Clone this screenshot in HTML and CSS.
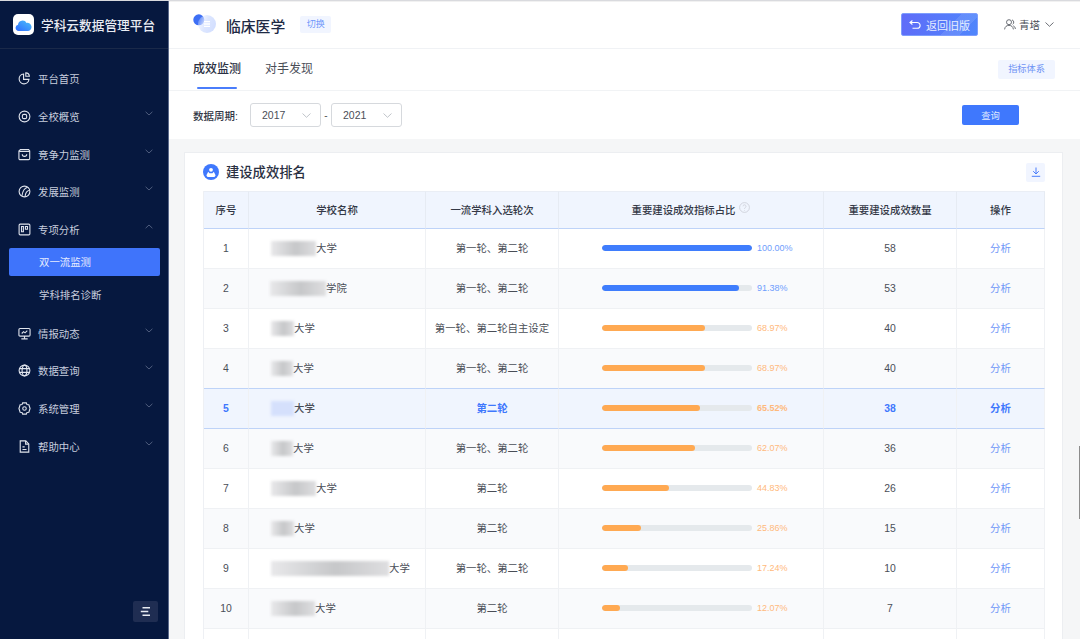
FILE: index.html
```html
<!DOCTYPE html>
<html lang="zh">
<head>
<meta charset="utf-8">
<title>学科云数据管理平台</title>
<link rel="stylesheet" href="styles.css">
</head>
<body>
<div class="app">
  <aside class="side">
    <div class="brand">
      <span class="logo"><svg width="17" height="12" viewBox="0 0 17 12"><defs><linearGradient id="cl" x1="0" y1="1" x2="1" y2="0"><stop offset="0" stop-color="#2f6bff"/><stop offset="1" stop-color="#4cc0fa"/></linearGradient></defs><path fill="url(#cl)" d="M3.6 12A3.2 3.2 0 0 1 3 5.7 4.6 4.6 0 0 1 11.6 3.9 4.1 4.1 0 0 1 13.2 12z"/></svg></span>
      <span class="brand-name">学科云数据管理平台</span>
    </div>
    <nav class="menu">
      <a class="item"><svg class="ico" viewBox="0 0 14 14"><path d="M6 2.2a5.3 5.3 0 1 0 5.8 5.8H6z"/><path d="M8.4 .9v3.7h3.9A4.2 4.2 0 0 0 8.4 .9z"/></svg><span class="label">平台首页</span></a>
      <a class="item"><svg class="ico" viewBox="0 0 14 14"><circle cx="7" cy="7" r="5.8"/><rect x="4.7" y="4.7" width="4.6" height="4.6" rx="1.6"/></svg><span class="label">全校概览</span><svg class="chev" viewBox="0 0 8 5"><path d="M.6.8 4 4 7.4.8"/></svg></a>
      <a class="item"><svg class="ico" viewBox="0 0 14 14"><path d="M2.6 1.6h8.8l1.2 1.6v8a1.3 1.3 0 0 1-1.3 1.3H2.3A1.3 1.3 0 0 1 1 11.2v-8z"/><path d="M1.2 3.6h11.6M4.6 6.6a2.4 2.4 0 0 0 4.8 0"/></svg><span class="label">竞争力监测</span><svg class="chev" viewBox="0 0 8 5"><path d="M.6.8 4 4 7.4.8"/></svg></a>
      <a class="item"><svg class="ico" viewBox="0 0 14 14"><circle cx="7" cy="7" r="5.8"/><path d="M10.4 2.4C7 3.2 5 6 4.2 11.8M12.6 5.6C10 6 8 8 7.6 12.6"/></svg><span class="label">发展监测</span><svg class="chev" viewBox="0 0 8 5"><path d="M.6.8 4 4 7.4.8"/></svg></a>
      <a class="item"><svg class="ico" viewBox="0 0 14 14"><rect x="1.2" y="1.2" width="11.6" height="11.6" rx="1.2"/><path d="M3.8 3.8h2v5.6h-2zM8 3.8h2.2v3H8z"/></svg><span class="label">专项分析</span><svg class="chev" viewBox="0 0 8 5"><path d="M.6 4.2 4 1l3.4 3.2"/></svg></a>
      <a class="sub sub-active">双一流监测</a>
      <a class="sub sub-next">学科排名诊断</a>
      <a class="item"><svg class="ico" viewBox="0 0 14 14"><rect x="1" y="1.6" width="12" height="8.2" rx="1.2"/><path d="M7 9.8v2.8M3.6 12.8h6.8M4 7l2-2 1.6 1.3L10 4"/></svg><span class="label">情报动态</span><svg class="chev" viewBox="0 0 8 5"><path d="M.6.8 4 4 7.4.8"/></svg></a>
      <a class="item"><svg class="ico" viewBox="0 0 14 14"><circle cx="7" cy="7" r="5.8"/><ellipse cx="7" cy="7" rx="2.6" ry="5.8"/><path d="M1.4 5h11.2M1.4 9h11.2"/></svg><span class="label">数据查询</span><svg class="chev" viewBox="0 0 8 5"><path d="M.6.8 4 4 7.4.8"/></svg></a>
      <a class="item"><svg class="ico" viewBox="0 0 14 14"><path d="M5 1h4l.7 1.8 2 .2L13 7l-1.3 4-2 .2L9 13H5l-.7-1.8-2-.2L1 7l1.3-4 2-.2z"/><circle cx="7" cy="7" r="1.9"/></svg><span class="label">系统管理</span><svg class="chev" viewBox="0 0 8 5"><path d="M.6.8 4 4 7.4.8"/></svg></a>
      <a class="item"><svg class="ico" viewBox="0 0 14 14"><path d="M2.4 1h6l3.2 3.2V13H2.4z"/><path d="M8.2 1v3.4h3.4M4.8 7.4h2.400M4.800 10.200h4.400"/></svg><span class="label">帮助中心</span><svg class="chev" viewBox="0 0 8 5"><path d="M.6.8 4 4 7.4.8"/></svg></a>
    </nav>
    <div class="side-foot">
      <button class="collapse"><svg width="11" height="11" viewBox="0 0 11 11"><path d="M2.500 1.800h7.500M.8 5.500h7.500M2.500 9.200h7.500"/></svg></button>
    </div>
  </aside>

  <main class="main">
    <header class="head">
      <svg class="disc" width="24" height="20" viewBox="0 0 24 20"><defs><linearGradient id="dg" x1="0" y1=".3" x2="1" y2=".7"><stop offset="0" stop-color="#dfe8ff" stop-opacity=".25"/><stop offset=".45" stop-color="#dce6ff"/><stop offset="1" stop-color="#d2deff"/></linearGradient></defs><circle cx="5.800" cy="5.800" r="5.500" fill="#3d6ff5"/><circle cx="14" cy="10" r="9" fill="url(#dg)"/><path d="M11 7.600h6M11 10h6M11 12.400h6" stroke="#fff" stroke-width="1.400"/></svg>
      <h1 class="subject">临床医学</h1>
      <span class="switch">切换</span>
      <button class="back"><svg width="12" height="10" viewBox="0 0 12 10"><path d="M1 2.500h7.200a2.900 2.900 0 0 1 0 5.800H3.500M3.400.5 1 2.500l2.400 2"/></svg>返回旧版</button>
      <span class="user"><svg class="user-ico" width="12" height="11" viewBox="0 0 12 11"><circle cx="5" cy="3.200" r="2.500"/><path d="M.6 10.400c.3-2.800 2-4 4.400-4s4.100 1.200 4.400 4M8 .9a2.500 2.500 0 0 1 .6 4.500M9.300 6.800c1.200.5 1.900 1.700 2.100 3.200"/></svg>青塔<svg class="user-chev" width="9" height="5" viewBox="0 0 9 5"><path d="M.5.500 4.500 4.300 8.500.5"/></svg></span>
    </header>

    <div class="tabs">
      <a class="tab tab-on">成效监测</a>
      <a class="tab">对手发现</a>
      <a class="indicator">指标体系</a>
    </div>

    <div class="filter">
      <span class="filter-label">数据周期:</span>
      <span class="select">2017<svg width="9" height="5" viewBox="0 0 9 5"><path d="M.5.500 4.500 4.300 8.500.5"/></svg></span>
      <span class="dash">-</span>
      <span class="select">2021<svg width="9" height="5" viewBox="0 0 9 5"><path d="M.5.500 4.500 4.300 8.500.5"/></svg></span>
      <button class="query">查询</button>
    </div>

    <section class="content">
      <div class="card">
        <div class="card-head">
          <span class="card-ico"><svg width="10" height="10" viewBox="0 0 10 10"><circle cx="5" cy="2.800" r="1.900" fill="#fff"/><path fill="#fff" d="M.4 8.200 2.200 4.800l1.300 1.400h3l1.300-1.400 1.800 3.400a5 5 0 0 1-9.200 0z"/></svg></span>
          <h2 class="card-title">建设成效排名</h2>
          <button class="dl"><svg width="10" height="10" viewBox="0 0 10 10"><path d="M5 .5v6.200M2.200 4.200 5 7l2.800-2.800M.8 9.300h8.400"/></svg></button>
        </div>
        <table class="rank">
          <colgroup><col class="c1"><col class="c2"><col class="c3"><col class="c4"><col class="c5"><col class="c6"></colgroup>
          <thead>
            <tr><th>序号</th><th>学校名称</th><th>一流学科入选轮次</th><th>重要建设成效指标占比<svg class="help" width="11" height="11" viewBox="0 0 11 11"><circle cx="5.500" cy="5.500" r="4.900"/><path d="M4 4.300a1.500 1.500 0 1 1 2.300 1.300c-.6.400-.8.700-.8 1.300M5.500 8v.6"/></svg></th><th>重要建设成效数量</th><th>操作</th></tr>
          </thead>
          <tbody>
            <tr><td>1</td><td class="name"><i class="mask" style="width:45px"></i>大学</td><td class="cjk">第一轮、第二轮</td><td class="cjk"><div class="pct"><span class="track"><span class="fill blue" style="width:100%"></span></span><span class="val t-blue">100.00%</span></div></td><td>58</td><td class="act">分析</td></tr>
            <tr><td>2</td><td class="name name-2"><i class="mask" style="width:56px"></i>学院</td><td class="cjk">第一轮、第二轮</td><td class="cjk"><div class="pct"><span class="track"><span class="fill blue" style="width:91.38%"></span></span><span class="val t-blue">91.38%</span></div></td><td>53</td><td class="act">分析</td></tr>
            <tr><td>3</td><td class="name"><i class="mask" style="width:23px"></i>大学</td><td class="cjk">第一轮、第二轮自主设定</td><td class="cjk"><div class="pct"><span class="track"><span class="fill orange" style="width:68.97%"></span></span><span class="val t-orange">68.97%</span></div></td><td>40</td><td class="act">分析</td></tr>
            <tr class="pre"><td>4</td><td class="name"><i class="mask" style="width:22px"></i>大学</td><td class="cjk">第一轮、第二轮</td><td class="cjk"><div class="pct"><span class="track"><span class="fill orange" style="width:68.97%"></span></span><span class="val t-orange">68.97%</span></div></td><td>40</td><td class="act">分析</td></tr>
            <tr class="hl"><td>5</td><td class="name"><i class="mask mask-blue" style="width:23px"></i><b>大学</b></td><td class="cjk">第二轮</td><td class="cjk"><div class="pct"><span class="track"><span class="fill orange" style="width:65.52%"></span></span><span class="val t-orange">65.52%</span></div></td><td>38</td><td class="act">分析</td></tr>
            <tr><td>6</td><td class="name"><i class="mask" style="width:22px"></i>大学</td><td class="cjk">第一轮、第二轮</td><td class="cjk"><div class="pct"><span class="track"><span class="fill orange" style="width:62.07%"></span></span><span class="val t-orange">62.07%</span></div></td><td>36</td><td class="act">分析</td></tr>
            <tr><td>7</td><td class="name"><i class="mask" style="width:45px"></i>大学</td><td class="cjk">第二轮</td><td class="cjk"><div class="pct"><span class="track"><span class="fill orange" style="width:44.83%"></span></span><span class="val t-orange">44.83%</span></div></td><td>26</td><td class="act">分析</td></tr>
            <tr><td>8</td><td class="name"><i class="mask" style="width:23px"></i>大学</td><td class="cjk">第二轮</td><td class="cjk"><div class="pct"><span class="track"><span class="fill orange" style="width:25.86%"></span></span><span class="val t-orange">25.86%</span></div></td><td>15</td><td class="act">分析</td></tr>
            <tr><td>9</td><td class="name"><i class="mask" style="width:118px"></i>大学</td><td class="cjk">第一轮、第二轮</td><td class="cjk"><div class="pct"><span class="track"><span class="fill orange" style="width:17.24%"></span></span><span class="val t-orange">17.24%</span></div></td><td>10</td><td class="act">分析</td></tr>
            <tr><td>10</td><td class="name"><i class="mask" style="width:44px"></i>大学</td><td class="cjk">第二轮</td><td class="cjk"><div class="pct"><span class="track"><span class="fill orange" style="width:12.07%"></span></span><span class="val t-orange">12.07%</span></div></td><td>7</td><td class="act">分析</td></tr>
            <tr><td></td><td></td><td></td><td></td><td></td><td></td></tr>
          </tbody>
        </table>
      </div>
    </section>
    <span class="scroll"></span>
  </main>
</div>
</body>
</html>
```

FILE: styles.css
```css
* { box-sizing: border-box; }
html, body { margin: 0; height: 100%; overflow: hidden; }
body { font-family: "Liberation Sans", "Noto Sans CJK SC", sans-serif; color: #3a3f4a; background: #fff; }
a { display: block; }
button { font-family: inherit; border: 0; padding: 0; }
h1, h2 { margin: 0; }

.app { display: flex; height: 639px; border-top: 1px solid #d9dade; }

/* sidebar */
.side { width: 169px; flex: none; display: flex; flex-direction: column; background: #06183f; border-right: 1px solid #5b6a8b; color: #c8cede; }
.brand { height: 48px; flex: none; display: flex; align-items: center; padding-left: 13px; gap: 7px; border-bottom: 1px solid #1a2949; }
.logo { width: 21px; height: 21px; border-radius: 5px; background: #fff; display: flex; align-items: center; justify-content: center; }
.brand-name { font-size: 12.7px; font-weight: 500; color: #e9ecf3; white-space: nowrap; }
.menu { padding-top: 11.2px; flex: 1; }
.item { height: 37.6px; display: flex; align-items: center; padding-left: 18px; font-size: 10.4px; }
.ico { width: 13px; height: 13px; flex: none; fill: none; stroke: #dfe3ec; stroke-width: 1.2; }
.label { margin-left: 7px; white-space: nowrap; }
.chev { width: 8px; height: 5px; margin-left: auto; margin-right: 15px; margin-top: -6px; fill: none; stroke: #4f5d7e; stroke-width: 1; }
.sub { font-size: 10.4px; padding-left: 39px; white-space: nowrap; }
.sub-active { height: 28px; line-height: 29px; margin: -.5px 8px 0 9px; padding-left: 30px; background: #3f74fb; border-radius: 2px; color: #e6ecff; }
.sub-next { height: 38.8px; line-height: 39px; }
.side-foot { flex: none; display: flex; justify-content: flex-end; padding: 0 10px 17px 0; }
.collapse { width: 25px; height: 21px; background: #1f2d52; border-radius: 2px; display: flex; align-items: center; justify-content: center; }
.collapse svg { fill: none; stroke: #e8ebf2; stroke-width: 1.4; }

/* main */
.main { position: relative; flex: 1; min-width: 0; display: flex; flex-direction: column; overflow: hidden; background: #f5f6f7; }
.head { height: 48px; flex: none; display: flex; align-items: center; padding: 0 26px 1px 24px; background: #fff; border-top: 1px solid #f1f1f1; border-bottom: 1px solid #f0f2f5; }
.disc { flex: none; margin-right: 9px; margin-top: -1px; }
.subject { font-size: 14.8px; font-weight: 500; color: #1e2a44; white-space: nowrap; margin-top: 1px; }
.switch { margin-left: 15px; width: 31px; height: 17px; line-height: 17px; text-align: center; font-size: 9px; color: #6f97fb; background: #f1f5ff; border-radius: 2px; }
.back { margin-left: auto; width: 77px; height: 23px; display: flex; align-items: center; justify-content: center; gap: 5px; font-size: 11px; color: #e8eeff; background: linear-gradient(135deg, transparent 62%, rgba(255,255,255,.1) 62%, rgba(255,255,255,.1) 82%, transparent 82%), linear-gradient(100deg, #5f6cf8, #4f86fc); border: 1px solid #7d9dfd; border-radius: 2px; }
.back svg { fill: none; stroke: #fff; stroke-width: 1.1; }
.user { margin-left: 26px; display: flex; align-items: center; font-size: 10.5px; color: #4a4e57; white-space: nowrap; }
.user-ico { fill: none; stroke: #5c6068; stroke-width: .9; margin-right: 3px; }
.user-chev { fill: none; stroke: #5c6068; stroke-width: .9; margin-left: 5px; }

.tabs { height: 42px; flex: none; display: flex; align-items: center; padding: 0 25px 0 24px; gap: 24px; background: #fff; border-bottom: 1px solid #f1f3f5; }
.tab { position: relative; height: 41px; line-height: 40px; font-size: 12px; color: #4a4e57; white-space: nowrap; }
.tab-on { font-weight: 500; color: #2a3042; }
.tab-on::after { content: ""; position: absolute; left: 4px; right: 4px; bottom: 1px; height: 2px; border-radius: 1px; background: #4a7dfb; }
.indicator { margin-left: auto; width: 57px; height: 19px; line-height: 19px; text-align: center; font-size: 9.2px; color: #6f93f5; background: #f1f5ff; border-radius: 2px; }

.filter { height: 48px; flex: none; display: flex; align-items: center; padding: 0 61px 0 24px; background: #fff; }
.filter-label { width: 57px; font-size: 10.5px; font-weight: 500; color: #333846; white-space: nowrap; }
.select { width: 71px; height: 24px; display: flex; align-items: center; justify-content: space-between; padding: 0 9px 0 11px; font-size: 10.5px; color: #4a4e57; border: 1px solid #d6d9dd; border-radius: 3px; }
.select svg { fill: none; stroke: #b9bdc4; stroke-width: .9; }
.dash { width: 10px; text-align: center; font-size: 10px; color: #555; }
.query { margin-left: auto; width: 57px; height: 20px; font-size: 9.3px; color: #dfe8ff; background: #3f78fd; border-radius: 2px; }

.content { flex: 1; min-height: 0; padding: 13px 17px 0 15px; }
.card { height: 100%; padding: 0 17px 0 18px; background: #fff; border: 1px solid #eceef1; border-bottom: 0; }
.card-head { height: 38px; display: flex; align-items: center; }
.card-ico { width: 16px; height: 16px; border-radius: 50%; background: #3f78fd; display: flex; align-items: center; justify-content: center; }
.card-title { margin-left: 7px; padding-bottom: 2px; font-size: 13.3px; font-weight: 500; color: #2a3042; white-space: nowrap; }
.dl { margin-left: auto; width: 19px; height: 19px; display: flex; align-items: center; justify-content: center; background: #f1f5ff; border-radius: 2px; }
.dl svg { fill: none; stroke: #4a7dfb; stroke-width: 1; }

.rank { width: 842px; table-layout: fixed; border-collapse: separate; border-spacing: 0; font-size: 10.4px; border-left: 1px solid #eef0f4; }
.c1 { width: 45px; } .c2 { width: 177px; } .c3 { width: 133px; } .c4 { width: 265px; } .c5 { width: 133px; } .c6 { width: 88px; }
.rank th { height: 38px; padding: 0 0 2px; background: #f0f5fe; font-size: 10.4px; font-weight: 500; color: #333846; border-top: 1px solid #eaeef5; border-right: 1px solid #e6ebf3; border-bottom: 1px solid #bed3f8; white-space: nowrap; }
.help { fill: none; stroke: #c5c9d1; stroke-width: .7; margin-left: 4px; vertical-align: 1px; }
.rank td { height: 40px; padding: 0; text-align: center; color: #4a4e57; border-right: 1px solid #eff1f4; border-bottom: 1px solid #eff1f4; white-space: nowrap; }
.rank tbody tr:nth-child(even) td { background: #f9fafc; }
.rank .cjk, .rank .act { padding-bottom: 2px; }
.rank .name { text-align: left; padding: 0 0 2px 22px; }
.rank .name-2 { padding-left: 21px; }
.mask { display: inline-block; height: 15px; vertical-align: -4px; background: linear-gradient(90deg, #e8e8ea, #c6c7c9 55%, #dedee0); filter: blur(1.5px); }
.mask-blue { background: #d5e0fc; }
.pct { display: flex; align-items: center; padding-left: 43px; }
.track { width: 150px; height: 6px; flex: none; background: #e5e9ec; border-radius: 3px; overflow: hidden; }
.fill { display: block; height: 100%; border-radius: 3px; }
.blue { background: #3f7dfd; }
.orange { background: #ffa952; }
.val { margin-left: 5px; font-size: 9px; }
.t-blue { color: #6f9dfc; }
.t-orange { color: #ffb97c; }
.rank .act { color: #6f97f8; }
.rank .pre td { border-bottom-color: #bed3f8; }
.rank .hl td { background: #f0f5fe; color: #3f78fd; font-weight: 700; border-bottom-color: #bed3f8; }
.rank .hl .name b { color: #4a4e57; font-weight: 500; }

.scroll { position: absolute; right: 0; top: 445px; width: 1px; height: 73px; background: #8c8c8c; }
```
